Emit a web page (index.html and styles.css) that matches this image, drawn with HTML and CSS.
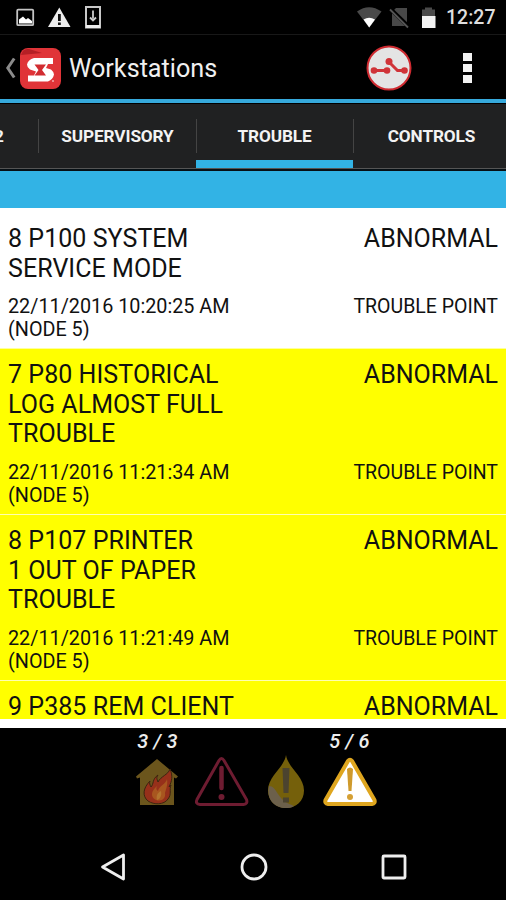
FILE: index.html
```html
<!DOCTYPE html>
<html lang="en">
<head>
    <meta charset="UTF-8">
    <meta name="viewport" content="width=device-width, initial-scale=1.0">
    <title>Workstations</title>
    <link rel="stylesheet" href="styles.css">
</head>
<body>

<div class="screen">
    <div class="status-bar">
        <svg class="status-left" width="90" height="34" viewBox="0 0 90 34">
            <rect x="1.2" y="9.7" width="16" height="15.5" rx="1" fill="none" stroke="#c4c4c4" stroke-width="1.8"/>
            <path d="M3 23.5v-4l4-3 3 3 2-1.500 4 3v2.500z" fill="#fff"/>
            <path d="M43.300 7.500L54.500 27H32z" fill="#ededed"/>
            <path d="M42 14h2.800v7H42zM42 22.500h2.800v2.500H42z" fill="#111"/>
            <path d="M70 7h14v20.500H70z" fill="none" stroke="#c9c9c9" stroke-width="2"/>
            <path d="M70 25h14v3H70z" fill="#eee"/>
            <path d="M77 10.500v8M74 17.500l3 3 3-3" fill="none" stroke="#ccc" stroke-width="1.800"/>
        </svg>
        <div class="status-right">
            <svg width="80" height="34" viewBox="0 0 80 34">
                <path d="M0 11.500Q12 3 24.500 11.500L12.200 27.500z" fill="#4a4a4a"/>
                <path d="M6.500 19.500Q12 16 18 19.500L12.200 27.500z" fill="#fff"/>
                <path d="M39 8h11v18H35V12z" fill="#484848"/>
                <path d="M33 8.500L52 27" stroke="#000" stroke-width="4"/>
                <path d="M33 9.500L51 27.500" stroke="#555" stroke-width="1.800"/>
                <path d="M65 9.500h3V7.500h7v2h3V17H65z" fill="#4a4a4a"/>
                <path d="M65 16h13.500v12H65z" fill="#f2f2f2"/>
            </svg>
            <span class="clock">12:27</span>
        </div>
    </div>

    <div class="action-bar">
        <svg class="back" width="11" height="24" viewBox="0 0 11 24">
            <path d="M9.200 2.500L2.800 12l6.400 9.500" fill="none" stroke="#8b8b8b" stroke-width="3"/>
        </svg>
        <svg class="logo" width="41" height="41" viewBox="0 0 41 41">
            <rect width="41" height="41" rx="8" fill="#e03438"/>
            <path d="M1 7Q3 0 9 1l13 4z" fill="#b51f25"/>
            <path d="M33 10v6h-5l-2 4 5 1.500q3 2.500 3 5-1 5-6 7H8v-6h6l2-4-6-2q-3-2-3-5 1-5 7-6.500z" fill="#fff"/>
            <path d="M14.500 16.500H26L22 22l4 5.500H14.500l4-5.500z" fill="#d12c31"/>
            <circle cx="33" cy="33" r="0.800" fill="#fff"/>
        </svg>
        <h1 class="title">Workstations</h1>
        <svg class="link-icon" width="46" height="46" viewBox="0 0 46 46">
            <circle cx="23" cy="23" r="21.500" fill="#e4e4e4" stroke="#ce2a30" stroke-width="2"/>
            <path d="M8 25.500h12.500M23 17l8.500 8.500h7" fill="none" stroke="#d03338" stroke-width="3"/>
            <circle cx="8" cy="25.500" r="3.300" fill="#d03338"/>
            <circle cx="21" cy="25.500" r="3.300" fill="#d03338"/>
            <circle cx="23" cy="16.500" r="3.500" fill="#d03338"/>
            <circle cx="38.500" cy="25.500" r="3.300" fill="#d03338"/>
        </svg>
        <div class="menu">
            <i></i><i></i><i></i>
        </div>
    </div>

    <div class="tabs">
        <div class="tab tab-cut">2</div>
        <div class="tab">SUPERVISORY</div>
        <div class="tab active">TROUBLE</div>
        <div class="tab">CONTROLS</div>
    </div>
    <div class="band"></div>

    <div class="list">
        <div class="row">
            <div class="main"><span class="name">8 P100 SYSTEM SERVICE MODE</span><span>ABNORMAL</span></div>
            <div class="sub"><span>22/11/2016 10:20:25 AM<br>(NODE 5)</span><span class="type">TROUBLE POINT</span></div>
        </div>
        <div class="row yellow">
            <div class="main"><span class="name">7 P80 HISTORICAL LOG ALMOST FULL TROUBLE</span><span>ABNORMAL</span></div>
            <div class="sub"><span>22/11/2016 11:21:34 AM<br>(NODE 5)</span><span class="type">TROUBLE POINT</span></div>
        </div>
        <div class="row yellow">
            <div class="main"><span class="name">8 P107 PRINTER<br>1 OUT OF PAPER TROUBLE</span><span>ABNORMAL</span></div>
            <div class="sub"><span>22/11/2016 11:21:49 AM<br>(NODE 5)</span><span class="type">TROUBLE POINT</span></div>
        </div>
        <div class="row yellow">
            <div class="main"><span class="name">9 P385 REM CLIENT</span><span>ABNORMAL</span></div>
        </div>
    </div>

    <div class="footer">
        <div class="counter">
            <span class="count">3 / 3</span>
            <svg width="56" height="56" viewBox="0 0 56 56">
                <path d="M27 4L48 21.500l-2 2-2-1V50H10V22.500l-3 1-1-2z" fill="#6b551c"/>
                <path d="M40 14c-2 6-9 7-12 13-1-3-2-4 0-7-6 4-4 9-7 12-1-2-2-4-1-6-7 7-8 15-2 20 6 4 16 4 20-2 4-5 1-9 3-14l-2 2c3-6 4-11 1-18z" fill="#96301a" stroke="#3c2410" stroke-width="1"/>
                <path d="M37 24c-1 5-8 7-9 12-2-1-2-3-1-5-6 5-7 11-1 14 6 2 10-2 9-7 1-4 3-8 2-14z" fill="#a8561f"/>
                <path d="M31 36c-4 2-5 5-4 9 3-1 5-4 4-9z" fill="#b3732e"/>
            </svg>
        </div>
        <div class="counter">
            <svg width="56" height="56" viewBox="0 0 56 56">
                <path d="M25 5.500Q27.500 1.500 30 5.500L52.500 44.500Q54 49 49.500 49.500H6Q1 49 3 44.500z" fill="none" stroke="#6e1c31" stroke-width="3"/>
                <path d="M27.500 13v20" stroke="#6e1c31" stroke-width="4.500" stroke-linecap="round"/>
                <circle cx="27.500" cy="42" r="3" fill="#6e1c31"/>
            </svg>
        </div>
        <div class="counter">
            <svg width="56" height="56" viewBox="0 0 56 56">
                <path d="M28 0C30 13 46 21 46 35.500C46 46 38 53 28 53S10 46 10 35.500C10 21 26 13 28 0z" fill="#75600b"/>
                <path d="M11 31C8 45 17 53 28 53c3 0 5 0 8-2-8-3-12-6-16-12-3-5-5-8-9-8z" fill="#6c604b"/>
                <path d="M24.500 13h7l-1 25h-5zM25 42.500h6v5h-6z" fill="#4b432f"/>
            </svg>
        </div>
        <div class="counter">
            <span class="count">5 / 6</span>
            <svg width="56" height="56" viewBox="0 0 56 56">
                <path d="M26 6Q28 3.500 30 6L52.500 45Q53.500 48.500 50 49H6Q2.500 48.500 3.500 45z" fill="#fff" stroke="#dfa61f" stroke-width="4"/>
                <path d="M25 14q3-3 6 0l-1.500 22h-3z" fill="#cf9a2c"/>
                <circle cx="28" cy="42" r="3" fill="#d5a034"/>
            </svg>
        </div>
    </div>

    <div class="nav-bar">
        <svg width="28" height="30" viewBox="0 0 28 30">
            <path d="M24.500 3v24L3.500 15z" fill="none" stroke="#eee" stroke-width="2.800" stroke-linejoin="round"/>
        </svg>
        <svg width="28" height="30" viewBox="0 0 28 30">
            <circle cx="14" cy="15" r="12" fill="none" stroke="#eee" stroke-width="2.800"/>
        </svg>
        <svg width="28" height="30" viewBox="0 0 28 30">
            <rect x="3" y="4" width="22" height="22" rx="1" fill="none" stroke="#eee" stroke-width="2.800"/>
        </svg>
    </div>
</div>

</body>
</html>
```
FILE: styles.css
```css
* {
    box-sizing: border-box;
}
body {
    margin: 0;
    font-family: Roboto, "Liberation Sans", sans-serif;
    background-color: #000;
}
svg {
    display: block;
    flex-shrink: 0;
}
.screen {
    width: 506px;
    height: 900px;
    display: flex;
    flex-direction: column;
    overflow: hidden;
}
.status-bar {
    height: 35px;
    flex-shrink: 0;
    display: flex;
    justify-content: space-between;
    padding: 0 11px 0 16px;
    border-bottom: 1px solid #181818;
}
.status-right {
    display: flex;
    gap: 9px;
}
.clock {
    color: #dedede;
    font-size: 19.5px;
    font-weight: 500;
    line-height: 36px;
    width: 49px;
    white-space: nowrap;
}
.action-bar {
    height: 68px;
    flex-shrink: 0;
    display: flex;
    align-items: center;
    padding: 2px 34px 0 5px;
    border-bottom: 4px solid #36a9dc;
}
.back {
    margin-right: 4px;
}
.title {
    flex: 1;
    margin: 2px 0 0 8px;
    color: #f0f0f0;
    font-size: 25.2px;
    font-weight: 400;
    line-height: 32px;
}
.link-icon {
    margin-right: 51px;
}
.menu {
    display: flex;
    flex-direction: column;
    gap: 3px;
    width: 9px;
}
.menu i {
    height: 8px;
    background-color: #f2f2f2;
}
.tabs {
    height: 66px;
    flex-shrink: 0;
    display: grid;
    grid-template-columns: 39px 157px 157px 153px;
    background: linear-gradient(#444, #444) 38px 15px / 1px 34px no-repeat,
        linear-gradient(#444, #444) 196px 15px / 1px 34px no-repeat,
        linear-gradient(#444, #444) 353px 15px / 1px 34px no-repeat,
        #202122;
    border-top: 1px solid #000;
    border-bottom: 1px solid #555;
}
.tab {
    color: #f3f3f3;
    font-size: 17.2px;
    font-weight: 700;
    line-height: 64px;
    text-align: center;
    white-space: nowrap;
    letter-spacing: -0.1px;
}
.tab:last-child {
    padding-left: 4px;
}
.tab-cut {
    text-align: left;
    text-indent: -6px;
}
.active {
    box-shadow: inset 0 -8px #32b3e5;
}
.band {
    height: 39px;
    flex-shrink: 0;
    background-color: #32b3e5;
    border-top: 2px solid #071015;
}
.list {
    height: 520px;
    flex-shrink: 0;
    overflow: hidden;
    padding-top: 5px;
    background-color: #fff;
    border-bottom: 9px solid #fff;
}
.row {
    padding: 11px 8px 7px;
    border-bottom: 1px solid #ffff9c;
    color: #111;
}
.yellow {
    background-color: #ff0;
    border-bottom: 1px solid #ffffb0;
}
.main,
.sub {
    display: flex;
    justify-content: space-between;
}
.main {
    font-size: 25px;
    line-height: 29.6px;
}
.name {
    width: 235px;
    letter-spacing: 0.05px;
}
.sub {
    margin-top: 12px;
    font-size: 19.8px;
    line-height: 23px;
}
.type {
    font-size: 19.5px;
}
.footer {
    height: 105px;
    flex-shrink: 0;
    display: flex;
    justify-content: center;
    gap: 8px;
    padding-left: 1px;
}
.counter {
    display: flex;
    flex-direction: column;
    align-items: center;
    justify-content: flex-end;
    height: 83px;
}
.count {
    color: #ededed;
    font-size: 20px;
    font-style: italic;
    font-weight: 500;
    line-height: 27px;
    letter-spacing: 0.2px;
}
.nav-bar {
    flex: 1;
    display: flex;
    justify-content: space-between;
    padding: 19px 98px 0 99px;
}
```
